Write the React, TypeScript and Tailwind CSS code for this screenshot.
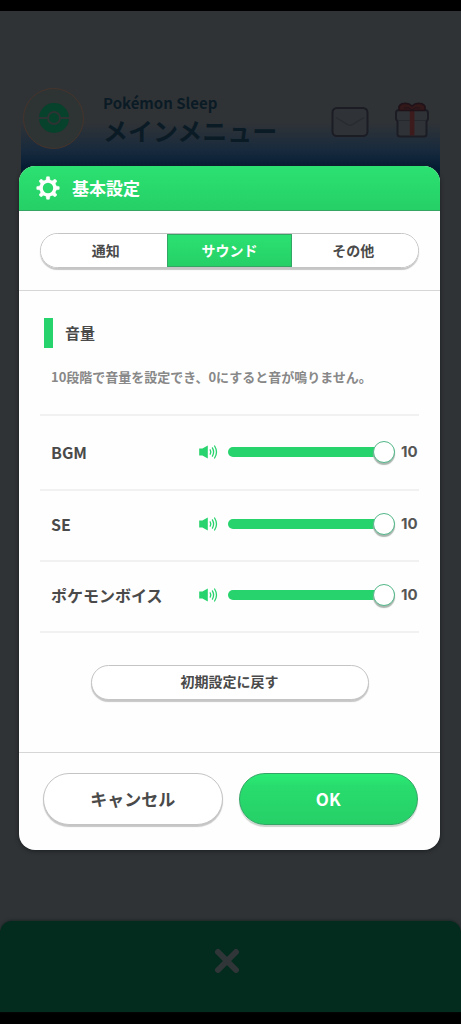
import { useState } from "react";

const MAX_VOLUME = 10;

const tabs = [
  { id: "notice", name: "通知" },
  { id: "sound", name: "サウンド" },
  { id: "other", name: "その他" },
];

const channels = [
  { id: "bgm", name: "BGM" },
  { id: "se", name: "SE" },
  { id: "voice", name: "ポケモンボイス" },
];

const GearIcon = () => (
  <svg className="w-6 h-6" viewBox="0 0 24 24" fill="none" stroke="currentColor" aria-hidden="true">
    <circle cx="12" cy="12" r="6.9" strokeWidth="3.4" />
    {[0, 45, 90, 135, 180, 225, 270, 315].map((angle) => (
      <path
        key={angle}
        d="M9.9 4.6 L10.7 0.8 H13.3 L14.1 4.6 Z"
        fill="currentColor"
        strokeWidth="0.6"
        strokeLinejoin="round"
        transform={`rotate(${angle} 12 12)`}
      />
    ))}
  </svg>
);

const SpeakerIcon = () => (
  <svg className="w-[19px] h-4 shrink-0 text-[#27d36d]" viewBox="0 0 19 16" fill="none" aria-hidden="true">
    <path d="M0.2 4.6 H3.4 L8.8 1.4 V14.6 L3.4 11.4 H0.2 Z" fill="currentColor" />
    <g stroke="currentColor" strokeWidth="1.3" strokeLinecap="round">
      <path d="M11.2 5.9 Q12.5 8 11.2 10.1" />
      <path d="M13.4 3.9 Q15.8 8 13.4 12.1" />
      <path d="M15.6 2 Q19.4 8 15.6 14" />
    </g>
  </svg>
);

const BallIcon = () => (
  <svg className="w-8 h-8" viewBox="0 0 32 32" aria-hidden="true">
    <circle cx="16" cy="16" r="15" fill="#07422c" />
    <rect x="0" y="15" width="32" height="2" fill="#2e3333" />
    <circle cx="16" cy="16" r="7" fill="#2e3333" />
    <circle cx="16" cy="16" r="5" fill="#07422c" />
  </svg>
);

const MailIcon = () => (
  <svg className="w-[38px] h-8" viewBox="0 0 38 32" fill="none" aria-hidden="true">
    <rect x="1.5" y="2" width="35" height="28" rx="4.5" fill="#2f3236" stroke="#1b1c24" strokeWidth="2" />
    <path d="M5 11.5 L16.5 18.5 Q19 20 21.5 18.5 L33 11.5" stroke="#282b30" strokeWidth="1.3" />
  </svg>
);

const GiftIcon = () => (
  <svg className="w-9 h-9" viewBox="0 0 36 36" fill="none" aria-hidden="true">
    <rect x="3.5" y="16" width="29" height="18.5" rx="2.5" fill="#2f3236" stroke="#1b1c24" strokeWidth="2" />
    <rect x="2" y="8" width="32" height="10.5" rx="2.5" fill="#2f3236" />
    <path d="M3.6 18.5 Q2 18.5 2 16 V11 Q2 8 5 8 H31 Q34 8 34 11 V16 Q34 18.5 32.4 18.5" stroke="#1b1c24" strokeWidth="2" />
    <path d="M4 18.5 H32" stroke="#25282d" strokeWidth="1" />
    <rect x="15.8" y="8" width="4.6" height="25.5" fill="#3d1a1c" />
    <path
      d="M18 8.5 H5.5 Q3.5 3.5 8 1.8 Q14 0 18 4 Q22 0 28 1.8 Q32.5 3.5 30.5 8.5 Z"
      fill="#33181a"
      stroke="#1f1319"
      strokeWidth="1.6"
    />
    <path d="M18 8 Q15 4.5 10 6 M18 8 Q21 4.5 26 6" stroke="#1f1319" strokeWidth="1" />
  </svg>
);

interface VolumeRowProps {
  id: string;
  name: string;
  value: number;
  onChange: (value: number) => void;
}

const VolumeRow: React.FC<VolumeRowProps> = ({ id, name, value, onChange }) => {
  const percent = (value / MAX_VOLUME) * 100;

  return (
    <div className="flex items-center h-[71px] pl-[11px] pb-[3px] border-b-2 border-[#f1f1f1] first:h-[75px] first:pb-0">
      <label htmlFor={id} className="w-[148px] shrink-0 text-base leading-6 whitespace-nowrap">
        {name}
      </label>
      <SpeakerIcon />
      <div className="relative flex items-center flex-1 min-w-0 ml-[10px] mr-[6px]">
        <div className="absolute inset-x-0 h-[10px] rounded-full overflow-hidden bg-[#d9d9d9]">
          <div className="h-full bg-[#27d36d]" style={{ width: `${percent}%` }} />
        </div>
        <input
          id={id}
          type="range"
          min={0}
          max={MAX_VOLUME}
          value={value}
          onChange={(e) => onChange(Number(e.target.value))}
          className="relative w-full h-[22px] appearance-none bg-transparent cursor-pointer [&::-webkit-slider-thumb]:appearance-none [&::-webkit-slider-thumb]:w-[22px] [&::-webkit-slider-thumb]:h-[22px] [&::-webkit-slider-thumb]:rounded-full [&::-webkit-slider-thumb]:bg-white [&::-webkit-slider-thumb]:border [&::-webkit-slider-thumb]:border-[#52b788] [&::-webkit-slider-thumb]:shadow-[0_2px_1px_#a9b5ae]"
        />
      </div>
      <output htmlFor={id} className="w-[18px] shrink-0 font-[Inter,sans-serif] text-[15px] leading-6 text-[#555]">
        {value}
      </output>
    </div>
  );
};

export default function App() {
  const [tab, setTab] = useState("sound");
  const [volumes, setVolumes] = useState<Record<string, number>>({ bgm: 10, se: 10, voice: 10 });

  return (
    <div
      lang="ja"
      className="relative flex flex-col min-h-screen bg-[#303336] border-t-[11px] border-b-[12px] border-black font-['Noto_Sans_CJK_JP',sans-serif] font-bold text-[#4a4a4a]"
    >
      <header className="mt-[76px] mx-[21px] h-[140px] bg-linear-to-b from-transparent from-25% via-[#182a3d] via-45% to-[#031a33] to-60%">
        <div className="flex items-center h-[62px] pl-[2px] pr-[10px]">
          <div className="flex items-center justify-center w-[61px] h-[61px] rounded-full border border-[#46342c] bg-[#2e3333]">
            <BallIcon />
          </div>
          <div className="flex-1 ml-[19px] pt-1 text-[#0b1b25]">
            <p className="text-[15px] leading-5">Pokémon Sleep</p>
            <h1 className="text-[25px] leading-[34px] whitespace-nowrap">メインメニュー</h1>
          </div>
          <button type="button" aria-label="メール" className="mt-[7px] mr-[25px]">
            <MailIcon />
          </button>
          <button type="button" aria-label="プレゼント" className="mt-1">
            <GiftIcon />
          </button>
        </div>
      </header>

      <nav className="flex justify-center mt-auto h-[91px] rounded-t-xl bg-[#032b1e] shadow-[0_-1px_3px_#1c2726] pb-3">
        <button type="button" aria-label="閉じる" className="pl-4 pr-6">
          <svg className="w-[26px] h-[26px]" viewBox="0 0 26 26" aria-hidden="true">
            <path d="M4 4 L22 22 M22 4 L4 22" stroke="#303638" strokeWidth="6" strokeLinecap="round" />
          </svg>
        </button>
      </nav>

      <div className="absolute inset-0 flex items-center pl-[19px] pr-[21px] pb-2">
        <section
          role="dialog"
          aria-labelledby="dialog-title"
          className="w-full rounded-2xl overflow-hidden bg-[#fefefe] shadow-[0_1px_4px_#1b1e20]"
        >
          <div className="flex items-center gap-3 h-[45px] pl-[17px] text-white bg-linear-to-b from-[#2ce171] to-[#25d067] border-b border-[#35a566]">
            <GearIcon />
            <h2 id="dialog-title" className="text-[17px] leading-6">基本設定</h2>
          </div>

          <div className="pt-[22px] pb-[22px] px-[21px] border-b border-[#d6d6d6]">
            <div
              role="tablist"
              className="grid grid-cols-3 h-[35px] rounded-full overflow-hidden border border-[#c4c4c4] shadow-[0_2px_1px_#c6c6c6]"
            >
              {tabs.map((t) => (
                <button
                  key={t.id}
                  type="button"
                  role="tab"
                  aria-selected={tab === t.id}
                  onClick={() => setTab(t.id)}
                  className={`text-[14px] leading-5 first:pl-1 last:pr-1 ${
                    tab === t.id
                      ? "text-white bg-linear-to-b from-[#2ce171] to-[#25d067] border border-[#35a566]"
                      : "bg-white"
                  }`}
                >
                  {t.name}
                </button>
              ))}
            </div>
          </div>

          <div className="px-[21px] pt-[27px] pb-[52px] border-b border-[#d6d6d6]">
            <div className="flex items-center gap-3 pl-1">
              <span className="w-[9px] h-[30px] bg-[#27d36d]" />
              <h3 className="text-[15px] leading-6">音量</h3>
            </div>
            <p className="mt-[19px] pl-[11px] text-[13px] leading-5 text-[#888] whitespace-nowrap">
              10段階で音量を設定でき、0にすると音が鳴りません。
            </p>
            <div className="mt-[27px] border-t-2 border-[#f1f1f1]">
              {channels.map((c) => (
                <VolumeRow
                  key={c.id}
                  id={c.id}
                  name={c.name}
                  value={volumes[c.id]}
                  onChange={(value) => setVolumes({ ...volumes, [c.id]: value })}
                />
              ))}
            </div>
            <button
              type="button"
              onClick={() => setVolumes({ bgm: 10, se: 10, voice: 10 })}
              className="block mx-auto mt-8 w-[278px] h-[35px] pb-[2px] rounded-full bg-white border border-[#c4c4c4] shadow-[0_2px_1px_#c6c6c6] text-[14px] leading-5"
            >
              初期設定に戻す
            </button>
          </div>

          <div className="flex gap-4 pt-5 pb-[25px] pl-6 pr-[22px] text-[17px] leading-6">
            <button type="button" className="flex-1 h-[52px] rounded-full bg-white border border-[#c4c4c4] shadow-[0_2px_1px_#c6c6c6]">
              キャンセル
            </button>
            <button
              type="button"
              className="flex-1 h-[52px] rounded-full text-white bg-linear-to-b from-[#2aec75] via-[#28dc6d] via-25% to-[#26d068] border border-[#35a566] shadow-[0_2px_1px_#cbd3cd]"
            >
              OK
            </button>
          </div>
        </section>
      </div>
    </div>
  );
}
